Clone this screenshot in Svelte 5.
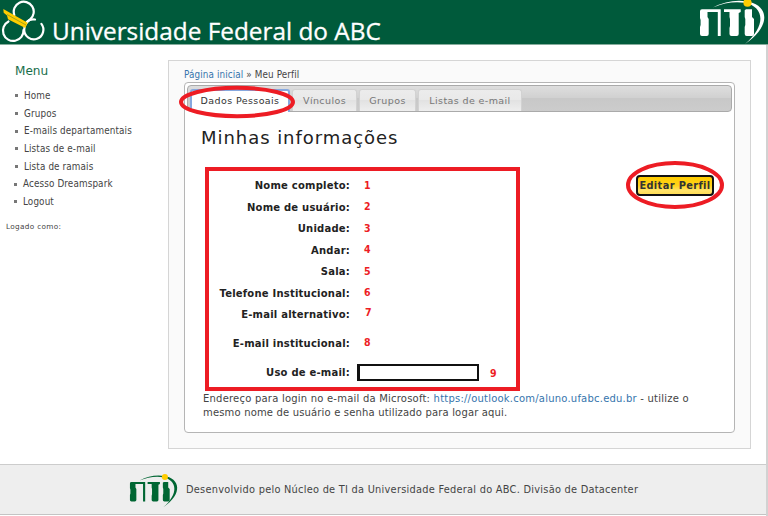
<script>
  const menu = ['Home', 'Grupos', 'E-mails departamentais', 'Listas de e-mail', 'Lista de ramais', 'Acesso Dreamspark', 'Logout'];
  const tabs = [
    { label: 'Dados Pessoais', cls: 'active' },
    { label: 'Vínculos', cls: 'links' },
    { label: 'Grupos', cls: 'groups' },
    { label: 'Listas de e-mail', cls: 'lists' }
  ];
  const fields = ['Nome completo:', 'Nome de usuário:', 'Unidade:', 'Andar:', 'Sala:', 'Telefone Institucional:', 'E-mail alternativo:', 'E-mail institucional:', 'Uso de e-mail:'];
</script>

{#snippet nti()}
  <path d="M17 7.5Q33 -1 50 1.2C72 4 77 25 49 44C71 25 68 7 49 2.8Q33 .5 17 7.5Z" />
  <path d="M6 9.3H24.7V36H21.8V12H11.5V17L12.7 19V34Q12.7 36 10.7 36H6Q4 36 4 34V27L4.6 25V20L4 18V11.3Q4 9.3 6 9.3Z" />
  <path d="M28 9.3H44.7V12L42.7 13V34Q42.7 36 40.7 36H35.5Q33.5 36 33.5 34V28L34 26V19L33.5 17V12H28Z" />
  <path d="M50 9.3H56V17L58 19V34Q58 36 56 36H50.7Q48.7 36 48.7 34V27L49.3 25V19L48.7 17V10.3Z" />
  <circle class="sun" cx="51.5" cy="2.7" r="4.1" />
{/snippet}

<div class="page">
  <header>
    <svg class="emblem" width="50" height="44" viewBox="0 0 50 44">
      <g fill="none" stroke="#fff" stroke-width="2.2" stroke-linecap="round">
        <path d="M14.3 15A10 10 0 1 1 30 19.5Q27 21.5 25.5 24" />
        <path d="M8.5 21.5A10.3 10.3 0 1 0 23.5 30" />
        <path d="M35 19.5Q30 18.5 27 22Q24.2 25 24.2 30A9.6 9.6 0 1 0 41.4 23.8" />
      </g>
      <path d="M3.3 9L27.7 22.8L25.3 28L8 19.2L7 15.5L3.7 12.8Z" fill="#fc0" />
      <path d="M7 14.5L26 25" stroke="#8a9a20" stroke-width=".8" />
    </svg>
    <h1>Universidade Federal do ABC</h1>
    <svg class="nti top" width="72" height="44" viewBox="0 0 72 44">{@render nti()}</svg>
  </header>

  <div class="body">
    <nav>
      <h2>Menu</h2>
      <ul>
        {#each menu as item}<li>{item}</li>{/each}
      </ul>
      <p>Logado como:</p>
    </nav>

    <main>
      <div class="crumb"><a>Página inicial</a> » Meu Perfil</div>
      <section class="panel">
        <div class="tabs">
          {#each tabs as tab}<div class="tab {tab.cls}"><span>{tab.label}</span></div>{/each}
          <svg class="ring tabring" width="118" height="34"><ellipse cx="59" cy="17" rx="56" ry="14.2" /></svg>
        </div>
        <h3>Minhas informações</h3>
        <div class="profile">
          <div class="fields">
            {#each fields as label, i}
              <div class="row r{i + 1}">
                <b class="label">{label}</b>
                {#if i === 8}<input aria-label="Uso de e-mail" />{/if}
                <b class="num">{i + 1}</b>
              </div>
            {/each}
          </div>
          <div class="edit">
            <button>Editar Perfil</button>
            <svg class="ring editring" width="102" height="52"><ellipse cx="51" cy="26" rx="47" ry="22" /></svg>
          </div>
        </div>
        <div class="note">
          <div class="n1">Endereço para login no e-mail da Microsoft: <a>https://outlook.com/aluno.ufabc.edu.br</a> - utilize o</div>
          <div class="n2">mesmo nome de usuário e senha utilizado para logar aqui.</div>
        </div>
      </section>
    </main>
  </div>

  <footer>
    <svg class="nti bottom" width="53" height="34" viewBox="0 0 72 46">{@render nti()}</svg>
    <span>Desenvolvido pelo Núcleo de TI da Universidade Federal do ABC. Divisão de Datacenter</span>
  </footer>
</div>

<style>
  :global(body) { margin: 0; overflow: hidden; background: #fff; }
  .page { box-sizing: border-box; width: 768px; height: 516px; border-right: 2px solid #d2d2d2; font-family: "DejaVu Sans", sans-serif; color: #444; display: flex; flex-direction: column; white-space: nowrap; }
  h1, h2, h3, p, ul { margin: 0; padding: 0; font-weight: 400; }
  a { color: #3675ad; }
  header { box-sizing: border-box; height: 45px; flex: none; width: 768px; background: #005a3b; border-bottom: 1px solid #85ac9c; display: flex; }
  .emblem { flex: none; }
  h1 { color: #fff; font: 24.35px/30px "Open Sans", sans-serif; padding: 16px 0 0 2px; -webkit-text-stroke: .3px #fff; }
  .nti { fill: #fff; flex: none; }
  .top { margin-left: auto; }
  .nti :global(.sun) { fill: #fc0; }
  .body { display: flex; height: 419px; flex: none; }
  nav { width: 168px; flex: none; }
  h2 { color: #176e4b; font: 12.1px/18px "DejaVu Sans", sans-serif; margin: 17px 0 0 15px; }
  ul { list-style: none; padding: 7px 0 0 15px; }
  li { height: 17.65px; line-height: 17.65px; font-family: "DejaVu Sans Condensed", "DejaVu Sans", sans-serif; font-size: 9.8px; letter-spacing: .13px; display: flex; align-items: center; }
  li::before { content: ""; width: 3px; height: 3px; background: #777; margin-right: 6px; }
  li:nth-child(n + 6) { margin-left: -1px; }
  nav p { font-size: 7.3px; letter-spacing: .33px; line-height: 12px; margin: 11px 0 0 6px; }
  main { box-sizing: border-box; width: 583px; height: 389px; margin-top: 15px; background: #fafafa; border: 1px solid #d5d5d5; padding: 7px 15px; }
  .crumb { font: 9.8px/14px "DejaVu Sans Condensed", "DejaVu Sans", sans-serif; letter-spacing: .12px; }
  .panel { box-sizing: border-box; width: 551px; height: 351px; border: 1px solid #b5b5b5; border-radius: 4px; background: #fff; padding: 2px; }
  .tabs { position: relative; box-sizing: border-box; width: 545px; height: 27px; border: 1px solid #aaa; border-radius: 4px; background: linear-gradient(#dedede, #d0d0d0 49%, #c8c8c8 50%, #ccc); padding: 3px 0 0 2px; display: flex; gap: 2px; }
  .tab { box-sizing: border-box; height: 22px; border: 1px solid #d2d2d2; border-bottom: 0; border-radius: 3px 3px 0 0; background: linear-gradient(#ececec, #e9e9e9 49%, #e2e2e2 50%, #eee); color: #777; font-size: 9.5px; letter-spacing: .4px; line-height: 21px; text-align: center; }
  .active { width: 100px; height: 23px; background: #fff; border: 2px solid #86a8df; border-bottom: 0; color: #333; line-height: 20px; }
  .links { width: 65px; } .groups { width: 57px; } .lists { width: 104px; }
  .ring { position: absolute; overflow: visible; fill: none; stroke: #ed1c24; stroke-width: 4px; }
  .tabring { left: -10px; top: -1px; }
  h3 { color: #222; font-size: 18px; line-height: 24px; letter-spacing: .95px; margin: 14px 0 0 14px; }
  .profile { display: flex; }
  .fields { box-sizing: border-box; width: 315px; height: 224px; border: 4px solid #ed1c24; margin: 17px 0 0 18px; padding-top: 4px; }
  .row { display: flex; align-items: center; height: 21.5px; }
  .label { width: 141px; text-align: right; color: #222; font-size: 10px; letter-spacing: .22px; }
  .num { color: #ed1c24; font: bold 10.5px/14px "DejaVu Sans Condensed", "DejaVu Sans", sans-serif; margin: -2px 0 0 14px; }
  .r7 .num { margin-top: -5px; margin-left: 15px; }
  .r8 { height: 35px; } .r9 { height: 25px; }
  input { box-sizing: border-box; width: 122px; height: 17px; border: 2px solid #111; border-left-width: 3px; margin: -2px 0 0 7px; padding: 0; border-radius: 0; }
  .r9 .label { margin-top: -2px; }
  .r9 .num { margin: 0 0 0 11px; }
  .edit { position: relative; margin: 25px 0 0 116px; height: 22px; }
  button { box-sizing: border-box; width: 78px; height: 21px; border: 2px solid #111; border-radius: 4px; background: linear-gradient(#fc0, #ffd21a 50%, #ffe36b 80%, #fd5); padding: 0; font: bold 9.8px/17px "DejaVu Sans", sans-serif; letter-spacing: .38px; color: #333; display: block; }
  .editring { left: -12px; top: -16px; }
  .note { margin: 1px 0 0 16px; font-size: 10px; line-height: 14px; }
  .n1 { letter-spacing: .215px; }
  .n2 { letter-spacing: .165px; }
  footer { box-sizing: border-box; height: 51px; flex: none; background: #eee; border-top: 1px solid #ccc; border-bottom: 1px solid #c4c4c4; display: flex; padding-left: 127px; }
  .bottom { fill: #006633; margin-top: 10px; overflow: visible; }
  footer span { font-size: 9.8px; line-height: 14px; letter-spacing: .26px; margin: 18px 0 0 6px; }
</style>
